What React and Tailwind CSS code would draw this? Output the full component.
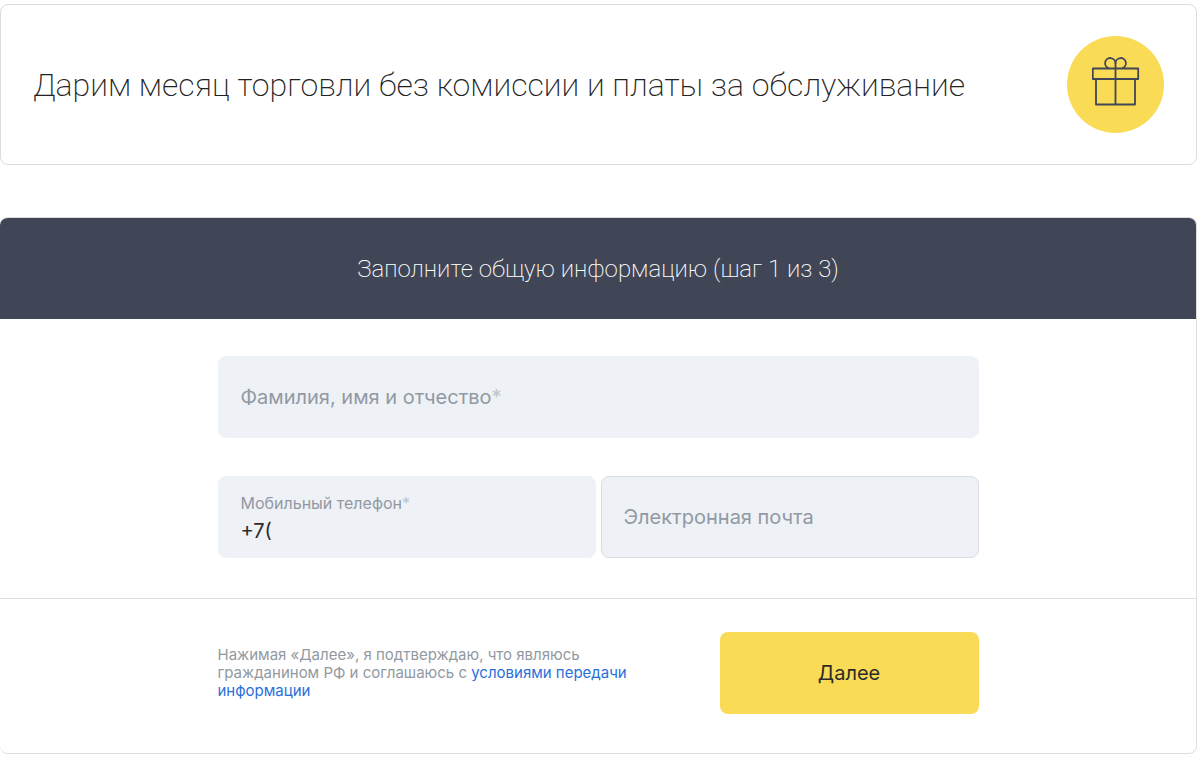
import React, { useState } from 'react';

const GiftIcon = () => (
  <svg viewBox="0 0 48 50" className="w-12 h-[50px]" fill="none" stroke="#404656" strokeWidth="1.8" strokeLinejoin="round" aria-hidden="true">
    <rect x="0.8" y="12.5" width="45.4" height="10.5" />
    <path d="M4 23v25.500h39V23" />
    <path d="M23.500 48.500V7" />
    <path d="M23.500 7.200a5.200 5.200 0 1 0-7 4.900" />
    <path d="M23.500 7.200a5.200 5.200 0 1 1 7 4.900" />
  </svg>
);

const Field = ({ id, label, required, type = 'text', value, onChange, bordered }) => {
  const filled = value !== '';

  return (
    <div className={`relative h-[82px] rounded-lg border bg-[#eef1f6] ${bordered ? 'border-[#d9dde1]' : 'border-[#eef1f6]'}`}>
      <input
        id={id}
        type={type}
        value={value}
        onChange={(e) => onChange(e.target.value)}
        className={`w-full h-full px-[22px] rounded-lg bg-transparent outline-none text-xl text-[#2b2b2b] ${filled ? 'pt-7' : ''}`}
      />
      <label
        htmlFor={id}
        className={`absolute left-[22px] pointer-events-none text-[#9299a2] ${filled ? 'top-3.5 text-base' : 'inset-y-0 flex items-center text-xl'}`}
      >
        <span>{label}{required && <span className="text-[#bfc4cb]">*</span>}</span>
      </label>
    </div>
  );
};

const App = () => {
  const [name, setName] = useState('');
  const [phone, setPhone] = useState('+7(');
  const [email, setEmail] = useState('');

  return (
    <div className="min-h-screen bg-white pt-1 pr-[3px] font-['Inter',sans-serif]">
      <section className="flex items-center justify-between px-8 py-[31px] mb-[52px] rounded-lg border border-[#dddddd]">
        <h1 className="font-['Roboto',sans-serif] font-extralight text-[32px] leading-10 text-[#222222]">
          Дарим месяц торговли без комиссии и платы за обслуживание
        </h1>
        <div className="flex items-center justify-center shrink-0 size-[97px] pb-2 rounded-full bg-[#fadb55]">
          <GiftIcon />
        </div>
      </section>

      <form onSubmit={(e) => e.preventDefault()} className="rounded-lg border border-l-0 border-[#dddddd] overflow-hidden">
        <header className="flex items-center justify-center h-[101px] px-8 bg-[#404656]">
          <h2 className="font-['Roboto',sans-serif] font-extralight text-2xl text-white">
            Заполните общую информацию (шаг 1 из 3)
          </h2>
        </header>

        <div className="max-w-[761px] mx-auto pt-[37px] pb-10">
          <Field id="name" label="Фамилия, имя и отчество" required value={name} onChange={setName} />
          <div className="grid grid-cols-2 gap-[5px] mt-[38px]">
            <Field id="phone" label="Мобильный телефон" required type="tel" value={phone} onChange={setPhone} />
            <Field id="email" label="Электронная почта" type="email" value={email} onChange={setEmail} bordered />
          </div>
        </div>

        <div className="border-t border-[#dddddd]">
          <div className="flex items-center justify-between max-w-[761px] mx-auto pt-[33px] pb-[39px]">
            <p className="w-[440px] text-[15px] leading-[18px] text-[#9299a2]">
              Нажимая «Далее», я подтверждаю, что являюсь гражданином РФ и соглашаюсь с{' '}
              <a href="#terms" className="text-[#2a6fdb]">условиями передачи информации</a>
            </p>
            <button type="submit" className="w-[259px] h-[82px] rounded-lg bg-[#fadb55] text-xl text-[#2b2b2b]">
              Далее
            </button>
          </div>
        </div>
      </form>
    </div>
  );
};

export default App;
